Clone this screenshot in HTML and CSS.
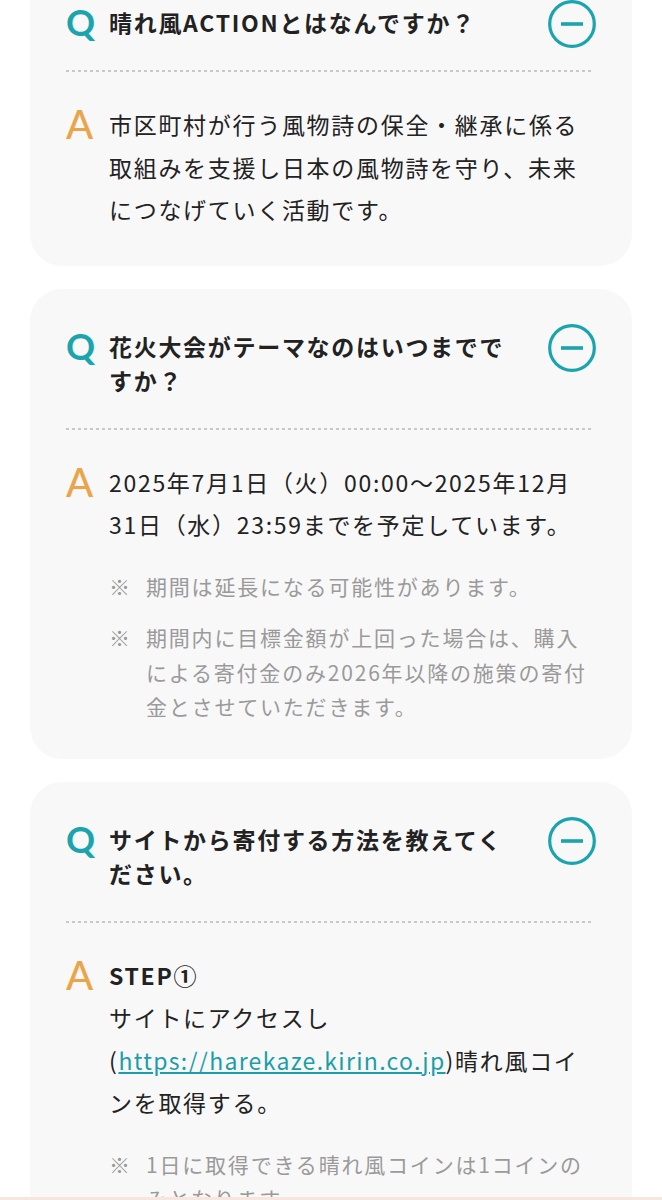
FILE: index.html
```html
<!DOCTYPE html>
<html lang="ja">
<head>
    <meta charset="UTF-8" />
    <meta name="viewport" content="width=device-width, initial-scale=1" />
    <title>よくあるご質問</title>
    <link rel="stylesheet" href="styles.css">
</head>
<body>

    <div class="faq">

        <div class="item">
            <div class="item-head">
                <span class="mark mark-q">Q</span>
                <p class="question">晴れ風ACTIONとはなんですか？</p>
                <span class="toggle">
                    <svg viewBox="0 0 48 48" width="48" height="48">
                        <circle cx="24" cy="24" r="22.3" fill="none" stroke="#19a4ae" stroke-width="3.2" />
                        <line x1="13" y1="24" x2="35" y2="24" stroke="#19a4ae" stroke-width="3.6" />
                    </svg>
                </span>
            </div>
            <div class="item-body">
                <span class="mark mark-a">A</span>
                <div class="answer">
                    <p>市区町村が行う風物詩の保全・継承に係る取組みを支援し日本の風物詩を守り、未来につなげていく活動です。</p>
                </div>
            </div>
        </div>

        <div class="item">
            <div class="item-head">
                <span class="mark mark-q">Q</span>
                <p class="question">花火大会がテーマなのはいつまでですか？</p>
                <span class="toggle">
                    <svg viewBox="0 0 48 48" width="48" height="48">
                        <circle cx="24" cy="24" r="22.3" fill="none" stroke="#19a4ae" stroke-width="3.2" />
                        <line x1="13" y1="24" x2="35" y2="24" stroke="#19a4ae" stroke-width="3.6" />
                    </svg>
                </span>
            </div>
            <div class="item-body">
                <span class="mark mark-a">A</span>
                <div class="answer">
                    <p>2025年7月1日（火）00:00〜2025年12月31日（水）23:59までを予定しています。</p>
                    <ul class="notes">
                        <li>期間は延長になる可能性があります。</li>
                        <li>期間内に目標金額が上回った場合は、購入による寄付金のみ2026年以降の施策の寄付金とさせていただきます。</li>
                    </ul>
                </div>
            </div>
        </div>

        <div class="item">
            <div class="item-head">
                <span class="mark mark-q">Q</span>
                <p class="question">サイトから寄付する方法を教えてください。</p>
                <span class="toggle">
                    <svg viewBox="0 0 48 48" width="48" height="48">
                        <circle cx="24" cy="24" r="22.3" fill="none" stroke="#19a4ae" stroke-width="3.2" />
                        <line x1="13" y1="24" x2="35" y2="24" stroke="#19a4ae" stroke-width="3.6" />
                    </svg>
                </span>
            </div>
            <div class="item-body">
                <span class="mark mark-a">A</span>
                <div class="answer">
                    <p class="step">STEP①</p>
                    <p>サイトにアクセスし<br><span class="nowrap">(<a href="#">https://harekaze.kirin.co.jp</a>)</span>晴れ風コイ<br>ンを取得する。</p>
                    <ul class="notes">
                        <li>1日に取得できる晴れ風コインは1コインのみとなります。</li>
                    </ul>
                </div>
            </div>
        </div>

    </div>

    <div class="bottom-line"></div>

</body>
</html>
```

FILE: styles.css
```css
body {
    font-family: "Noto Sans CJK JP", "Noto Sans", sans-serif;
    background-color: #fff;
    margin: 0;
    color: #222;
}

.faq {
    display: flex;
    flex-direction: column;
    gap: 23px;
    padding: 0 30px;
    margin-top: -35px;
}

.item {
    background-color: #f8f8f8;
    border-radius: 32px;
    padding: 40px 40px 35px 36px;
}

.item-head {
    display: flex;
    align-items: flex-start;
    padding-bottom: 33px;
    background-image: linear-gradient(to right, #c9c9c9 50%, transparent 50%);
    background-size: 6px 2px;
    background-repeat: repeat-x;
    background-position: left bottom;
}

.item-body {
    display: flex;
    align-items: flex-start;
    padding-top: 31px;
}

.mark {
    width: 43px;
    flex-shrink: 0;
    font-family: Lato, "Noto Sans", sans-serif;
    font-weight: 700;
    font-size: 36px;
}

.mark-q {
    color: #19a4ae;
    line-height: 34px;
}

.mark-a {
    color: #eaa54b;
    font-weight: 500;
    font-size: 40px;
    line-height: 42px;
}

.question {
    margin: 0;
    width: 410px;
    font-size: 23px;
    font-weight: 700;
    line-height: 34px;
    letter-spacing: 1.7px;
}

.toggle {
    margin: -5px -4px -9px auto;
    width: 48px;
    height: 48px;
}

.toggle svg {
    display: block;
}

.answer {
    flex: 1;
}

.answer p {
    margin: 0;
    font-size: 23px;
    line-height: 42.5px;
    letter-spacing: 1.7px;
}

.answer .step {
    font-weight: 700;
}

.nowrap {
    white-space: nowrap;
}

.answer a {
    color: #1a9eab;
    letter-spacing: 1.3px;
}

.notes {
    list-style: none;
    margin: 23px 0 0;
    padding: 0;
}

.notes li {
    display: flex;
    font-size: 21px;
    line-height: 34.5px;
    letter-spacing: 1.8px;
    color: #9a9a9a;
}

.notes li + li {
    margin-top: 17px;
}

.notes li::before {
    content: "※";
    width: 37px;
    flex-shrink: 0;
    letter-spacing: 0;
}

.bottom-line {
    position: fixed;
    left: 0;
    right: 0;
    bottom: 0;
    height: 3px;
    background-color: #f7e6de;
}
```
